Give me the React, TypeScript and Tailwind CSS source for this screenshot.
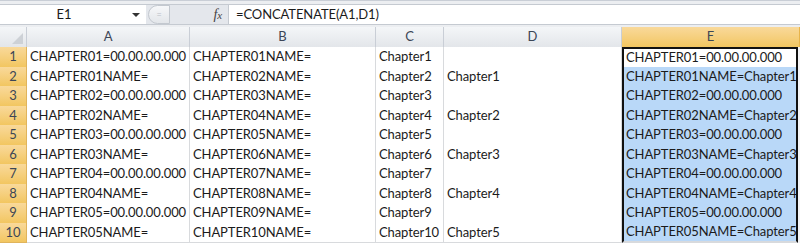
import React from "react"

const cols = ["A", "B", "C", "D", "E"]

const rows: string[][] = [
  ["CHAPTER01=00.00.00.000", "CHAPTER01NAME=", "Chapter1", "", "CHAPTER01=00.00.00.000"],
  ["CHAPTER01NAME=", "CHAPTER02NAME=", "Chapter2", "Chapter1", "CHAPTER01NAME=Chapter1"],
  ["CHAPTER02=00.00.00.000", "CHAPTER03NAME=", "Chapter3", "", "CHAPTER02=00.00.00.000"],
  ["CHAPTER02NAME=", "CHAPTER04NAME=", "Chapter4", "Chapter2", "CHAPTER02NAME=Chapter2"],
  ["CHAPTER03=00.00.00.000", "CHAPTER05NAME=", "Chapter5", "", "CHAPTER03=00.00.00.000"],
  ["CHAPTER03NAME=", "CHAPTER06NAME=", "Chapter6", "Chapter3", "CHAPTER03NAME=Chapter3"],
  ["CHAPTER04=00.00.00.000", "CHAPTER07NAME=", "Chapter7", "", "CHAPTER04=00.00.00.000"],
  ["CHAPTER04NAME=", "CHAPTER08NAME=", "Chapter8", "Chapter4", "CHAPTER04NAME=Chapter4"],
  ["CHAPTER05=00.00.00.000", "CHAPTER09NAME=", "Chapter9", "", "CHAPTER05=00.00.00.000"],
  ["CHAPTER05NAME=", "CHAPTER10NAME=", "Chapter10", "Chapter5", "CHAPTER05NAME=Chapter5"],
]

const grid = "grid grid-cols-[27px_163px_186px_68px_178px_178px]"

export default function App() {
  return (
    <div className="w-[800px] h-[243px] overflow-hidden bg-[#f3f4f6] font-['Lato','Open_Sans',sans-serif] text-[13px] tracking-[-0.1px] text-[#1b1b1b]">
      {/* formula bar */}
      <div className="h-[27px] border-t border-[#c9ced6] bg-[#eceef1] pt-[3px]">
        <div className="flex h-[21px] border-y border-[#c5cad1]">
          <div className="relative flex w-[146px] items-center justify-center bg-white">
            <span className="-ml-[18px]">E1</span>
            <span className="absolute right-[6px] top-[8px] h-0 w-0 border-x-[4px] border-t-[4px] border-x-transparent border-t-[#333]" />
          </div>
          <div className="flex w-[82px] items-center bg-[#e4e7ec]">
            <div className="ml-[2px] flex h-[19px] w-[22px] items-center justify-center rounded-l-full border border-[#c3c8cf] bg-gradient-to-b from-[#f6f7f9] to-[#e3e6ea]">
              <span className="text-[9px] text-[#b9bec6]">=</span>
            </div>
            <span className="ml-auto mr-[6px] font-['Liberation_Serif',serif] text-[14px] italic text-[#444]">
              f<span className="text-[11px]">x</span>
            </span>
          </div>
          <div className="flex flex-1 items-center border-l border-[#c5cad1] bg-white pl-[7px]">
            =CONCATENATE(A1,D1)
          </div>
        </div>
      </div>

      {/* column headers */}
      <div className={`${grid} h-[20px] border-b border-[#9eb6ce]`}>
        <div className="relative border-r border-[#c9ced6] bg-gradient-to-b from-[#f4f6f8] to-[#e3e6ea]">
          <span className="absolute bottom-[3px] right-[3px] h-0 w-0 [border-bottom:11px_solid_#cdd1d6] [border-left:11px_solid_transparent]" />
        </div>
        {cols.map((c) => (
          <div
            key={c}
            className={`flex items-center justify-center border-r text-[#3c4656] ${
              c === "E"
                ? "bg-gradient-to-b from-[#f9d99a] to-[#f2c660] border-[#e8b44a]"
                : "bg-gradient-to-b from-[#f4f6f8] to-[#e3e6ea] border-[#c9ced6]"
            }`}
          >
            {c}
          </div>
        ))}
      </div>

      {/* rows */}
      {rows.map((r, i) => (
        <div key={i} className={`${grid} h-[19.5px]`}>
          <div className="flex items-center justify-center border-r border-b border-[#e0b45c] bg-gradient-to-b from-[#f9d99a] to-[#f2c660] text-[#3c4656]">
            {i + 1}
          </div>
          {r.map((v, j) => {
            const isE = j === 4
            let cls = "flex items-center whitespace-nowrap overflow-hidden pl-[3px] border-r border-b border-[#d8dadd] bg-white"
            if (isE) {
              cls =
                "flex items-center whitespace-nowrap overflow-hidden pl-[2px] border-x-2 border-x-[#111] border-b border-b-[#d8dadd] mr-[2px] " +
                (i === 0 ? "bg-white border-t-2 border-t-[#111]" : "bg-[#b9d8f8]") +
                (i === 9 ? " border-b-2 border-b-[#111]" : "")
            }
            return (
              <div key={j} className={cls}>
                {v}
              </div>
            )
          })}
        </div>
      ))}
    </div>
  )
}
